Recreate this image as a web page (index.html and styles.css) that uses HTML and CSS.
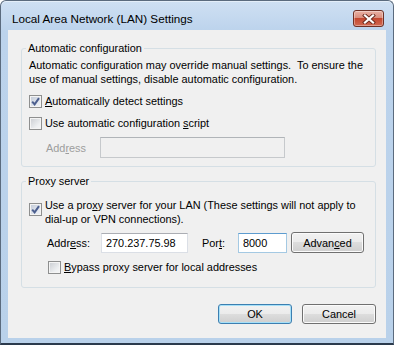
FILE: index.html
```html
<!DOCTYPE html>
<html lang="en">
<head>
    <meta charset="UTF-8">
    <meta name="viewport" content="width=device-width, initial-scale=1.0">
    <title>Local Area Network (LAN) Settings</title>
    <link rel="stylesheet" href="styles.css">
</head>
<body>
    <div class="window">
        <div class="titlebar">
            <span class="title">Local Area Network (LAN) Settings</span>
            <button class="close" title="Close">
                <svg width="14" height="10" viewBox="0 0 14 10">
                    <path d="M3 1.5 L11 8.5 M11 1.5 L3 8.5" stroke="#6b2a1e" stroke-width="4" stroke-linecap="square"/>
                    <path d="M3 1.5 L11 8.5 M11 1.5 L3 8.5" stroke="#ffffff" stroke-width="2.2" stroke-linecap="square"/>
                </svg>
            </button>
        </div>

        <div class="client">
            <fieldset class="group group-auto">
                <legend>Automatic configuration</legend>
                <p class="note">Automatic configuration may override manual settings.&nbsp; To ensure the<br>use of manual settings, disable automatic configuration.</p>

                <label class="check">
                    <span class="box checked"></span>
                    <span><u>A</u>utomatically detect settings</span>
                </label>

                <label class="check">
                    <span class="box"></span>
                    <span>Use automatic configuration <u>s</u>cript</span>
                </label>

                <div class="field-row script-row">
                    <span class="field-label disabled">Add<u>r</u>ess</span>
                    <input type="text" class="field field-script" disabled>
                </div>
            </fieldset>

            <fieldset class="group group-proxy">
                <legend>Proxy server</legend>

                <label class="check check-multi">
                    <span class="box checked"></span>
                    <span>Use a pro<u>x</u>y server for your LAN (These settings will not apply to<br>dial-up or VPN connections).</span>
                </label>

                <div class="field-row proxy-row">
                    <span class="field-label">Addr<u>e</u>ss:</span>
                    <input type="text" class="field field-address" value="270.237.75.98">
                    <span class="port-label">Por<u>t</u>:</span>
                    <input type="text" class="field field-port focused" value="8000">
                    <button class="btn btn-advanced">Advan<u>c</u>ed</button>
                </div>

                <label class="check check-bypass">
                    <span class="box"></span>
                    <span><u>B</u>ypass proxy server for local addresses</span>
                </label>
            </fieldset>

            <div class="actions">
                <button class="btn btn-default">OK</button>
                <button class="btn">Cancel</button>
            </div>
        </div>
    </div>
</body>
</html>
```

FILE: styles.css
```css
* {
    margin: 0;
    padding: 0;
    box-sizing: border-box;
    font-family: "Liberation Sans", Arial, sans-serif;
}

body {
    background: #ffffff;
    font-size: 10.9px;
    color: #000;
}

.window {
    width: 394px;
    height: 345px;
    border: 1px solid #5b6b7e;
    border-bottom: 2px solid #2b3a4c;
    border-radius: 6px 6px 0 0;
    background: linear-gradient(#cfe0f3, #bcd3ec 30px, #b9d1ea);
    box-shadow: inset 0 1px 0 #e4eef9;
}

/* title bar */
.titlebar {
    height: 29px;
    display: flex;
    justify-content: space-between;
    align-items: flex-start;
    padding: 9px 9px 0 11px;
}

.title {
    font-size: 11.7px;
    line-height: 15px;
    padding-top: 1px;
}

.close {
    width: 31px;
    height: 17px;
    border: 1px solid #6e3025;
    border-radius: 3px;
    background: linear-gradient(#eab1a4, #d98e7e 45%, #c4472f 50%, #d16a52);
    box-shadow: inset 0 0 0 1px rgba(255, 255, 255, 0.35);
    display: flex;
    align-items: center;
    justify-content: center;
}

/* client area */
.client {
    margin: 0 7px;
    height: 308px;
    background: #f0f0f0;
    padding-top: 11px;
}

.group {
    margin: 0 10px 0 13px;
    border: 1px solid #d5dfe5;
    border-radius: 3px;
    padding: 2px 7px 8px 7px;
}

.group legend {
    line-height: 15px;
    padding: 0 2px;
    margin-left: -3px;
}

.group-proxy {
    margin-top: 7px;
    padding-top: 9px;
    padding-bottom: 13px;
}

.note {
    line-height: 14px;
    white-space: nowrap;
}

u {
    text-decoration-thickness: 1px;
    text-underline-offset: 1px;
}

/* checkboxes */
.check {
    display: flex;
    align-items: center;
    gap: 3px;
    line-height: 14px;
    margin-top: 8px;
    white-space: nowrap;
}

.check-multi {
    align-items: flex-start;
    margin-top: 0;
}

.check-multi .box {
    margin-top: 5px;
}

.check-bypass {
    margin-top: 7px;
    padding-left: 19px;
}

.box {
    flex: none;
    width: 13px;
    height: 13px;
    border: 1px solid #8e8f8f;
    background: linear-gradient(135deg, #c9ccd1, #eef0f2 70%, #f6f6f6);
    box-shadow: inset 0 0 0 1px #f4f4f4;
}

.box.checked {
    background-color: #dde3ec;
    background-image: url("data:image/svg+xml,%3Csvg xmlns='http://www.w3.org/2000/svg' width='11' height='11'%3E%3Cpath d='M2.2 5.6 L4.6 8.4 L9 2.2' fill='none' stroke='%234c5f8f' stroke-width='2'/%3E%3C/svg%3E"),
        linear-gradient(135deg, #c0c8d6, #e6eaf1 70%, #f1f3f7);
    background-repeat: no-repeat;
    background-position: center;
}

/* text fields */
.field-row {
    display: flex;
    align-items: center;
}

.script-row {
    margin-top: 7px;
    padding-left: 17px;
}

.proxy-row {
    margin-top: 6px;
    padding-left: 18px;
    height: 21px;
}

.field-label {
    width: 54px;
}

.field-label.disabled {
    color: #9d9d9d;
}

.field {
    height: 20px;
    border: 1px solid #dbdfe6;
    border-top-color: #abadb3;
    background: #fff;
    padding: 0 4px;
    font-size: 10.9px;
    color: #000;
    outline: none;
}

.field-script {
    width: 185px;
    height: 21px;
    background: #f0f0f0;
    border-color: #c6c9cc;
    border-top-color: #b0b4b8;
}

.field-address {
    width: 87px;
}

.port-label {
    width: 36px;
    margin-left: 14px;
}

.field-port {
    width: 49px;
}

.field-port.focused {
    border-color: #a4c9e3;
    border-top-color: #5d9ccf;
}

/* buttons */
.btn {
    height: 21px;
    border: 1px solid #707070;
    border-radius: 3px;
    background: linear-gradient(#f2f2f2, #ebebeb 50%, #dddddd 50%, #cfcfcf);
    box-shadow: inset 0 0 0 1px #fbfbfb;
    font-size: 10.9px;
    color: #000;
    width: 74px;
}

.btn-advanced {
    width: 73px;
    margin-left: 4px;
}

.btn-default {
    border-color: #3c7fb1;
    box-shadow: inset 0 0 0 1px #a6e0f8;
}

.actions {
    display: flex;
    justify-content: flex-end;
    gap: 10px;
    margin: 16px 10px 0 0;
}

.actions .btn {
    height: 20px;
}
```
